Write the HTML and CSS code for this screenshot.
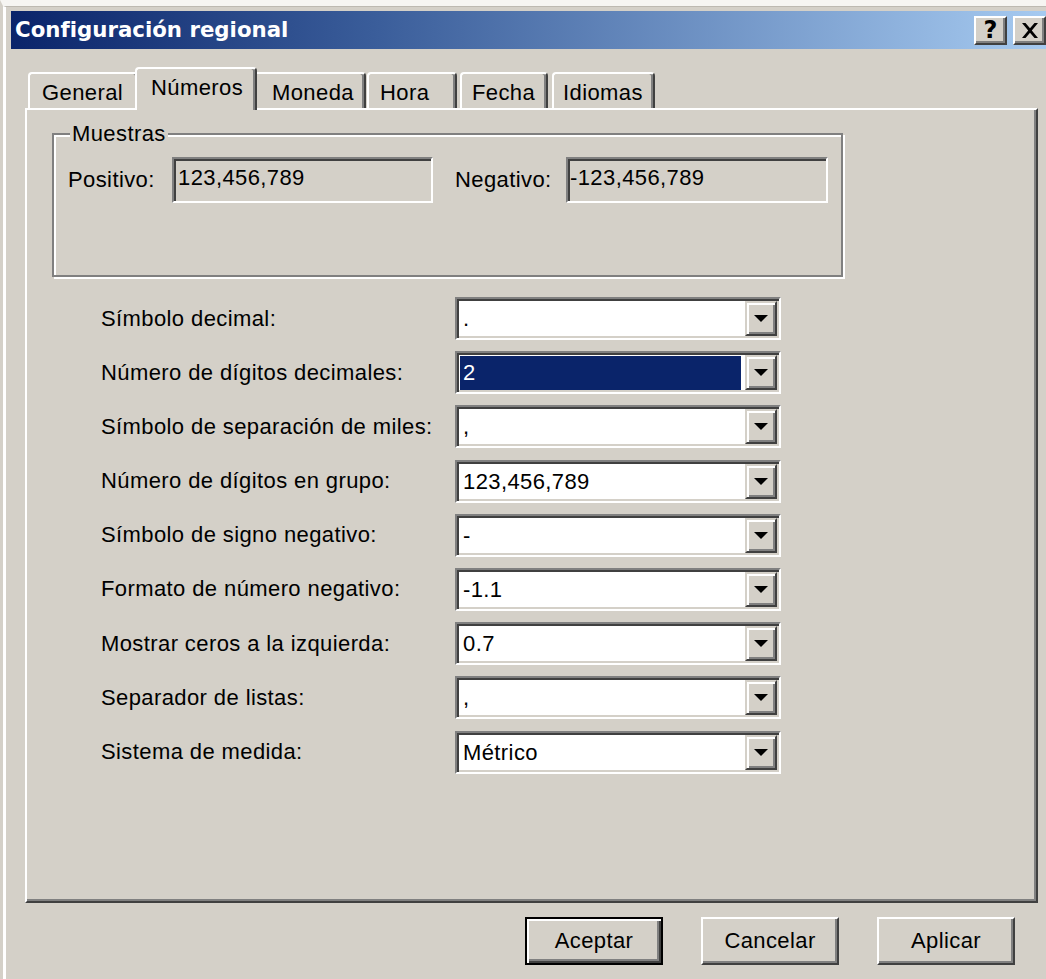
FILE: index.html
```html
<!DOCTYPE html>
<html lang="es">
<head>
<meta charset="utf-8">
<title>Configuración regional</title>
<link rel="stylesheet" href="styles.css">
</head>
<body>
<div class="frame">
  <div class="window">
    <div class="titlebar">
      <span class="title">Configuración regional</span>
      <div class="caption-buttons">
        <div class="cap-btn help">?</div>
        <div class="cap-btn close">
          <svg width="18" height="15" viewBox="0 0 18 15"><path d="M1 0h3.5l4.5 5.3 4.5-5.3h3.5l-6.2 7.5 6.2 7.5h-3.5l-4.5-5.3-4.5 5.3h-3.5l6.2-7.5z" fill="#000"/></svg>
        </div>
      </div>
    </div>

    <div class="client">
      <div class="tabs">
        <div class="tab tab-general">General</div>
        <div class="tab tab-numeros active">Números</div>
        <div class="tab tab-moneda">Moneda</div>
        <div class="tab tab-hora">Hora</div>
        <div class="tab tab-fecha">Fecha</div>
        <div class="tab tab-idiomas">Idiomas</div>
      </div>

      <div class="panel">
        <fieldset class="group">
          <legend>Muestras</legend>
          <div class="samples">
            <span class="sample-label">Positivo:</span>
            <div class="sample-field">123,456,789</div>
            <span class="sample-label neg">Negativo:</span>
            <div class="sample-field neg-field">-123,456,789</div>
          </div>
        </fieldset>

        <div class="settings">
          <label class="setting-label">Símbolo decimal:</label>
          <div class="combo"><span class="combo-value">.</span><span class="combo-btn"><svg width="14" height="7" viewBox="0 0 14 7"><path d="M0 0h14l-7 7z" fill="#000"/></svg></span></div>

          <label class="setting-label">Número de dígitos decimales:</label>
          <div class="combo"><span class="combo-value"><span class="selection">2</span></span><span class="combo-btn"><svg width="14" height="7" viewBox="0 0 14 7"><path d="M0 0h14l-7 7z" fill="#000"/></svg></span></div>

          <label class="setting-label">Símbolo de separación de miles:</label>
          <div class="combo"><span class="combo-value">,</span><span class="combo-btn"><svg width="14" height="7" viewBox="0 0 14 7"><path d="M0 0h14l-7 7z" fill="#000"/></svg></span></div>

          <label class="setting-label">Número de dígitos en grupo:</label>
          <div class="combo"><span class="combo-value">123,456,789</span><span class="combo-btn"><svg width="14" height="7" viewBox="0 0 14 7"><path d="M0 0h14l-7 7z" fill="#000"/></svg></span></div>

          <label class="setting-label">Símbolo de signo negativo:</label>
          <div class="combo"><span class="combo-value">-</span><span class="combo-btn"><svg width="14" height="7" viewBox="0 0 14 7"><path d="M0 0h14l-7 7z" fill="#000"/></svg></span></div>

          <label class="setting-label">Formato de número negativo:</label>
          <div class="combo"><span class="combo-value">-1.1</span><span class="combo-btn"><svg width="14" height="7" viewBox="0 0 14 7"><path d="M0 0h14l-7 7z" fill="#000"/></svg></span></div>

          <label class="setting-label">Mostrar ceros a la izquierda:</label>
          <div class="combo"><span class="combo-value">0.7</span><span class="combo-btn"><svg width="14" height="7" viewBox="0 0 14 7"><path d="M0 0h14l-7 7z" fill="#000"/></svg></span></div>

          <label class="setting-label">Separador de listas:</label>
          <div class="combo"><span class="combo-value">,</span><span class="combo-btn"><svg width="14" height="7" viewBox="0 0 14 7"><path d="M0 0h14l-7 7z" fill="#000"/></svg></span></div>

          <label class="setting-label">Sistema de medida:</label>
          <div class="combo"><span class="combo-value">Métrico</span><span class="combo-btn"><svg width="14" height="7" viewBox="0 0 14 7"><path d="M0 0h14l-7 7z" fill="#000"/></svg></span></div>
        </div>
      </div>

      <div class="actions">
        <div class="btn default">Aceptar</div>
        <div class="btn">Cancelar</div>
        <div class="btn">Aplicar</div>
      </div>
    </div>
  </div>
</div>
</body>
</html>
```

FILE: styles.css
```css
/* Classic 3D dialog palette */
html, body {
  margin: 0;
  padding: 0;
}

body {
  width: 1046px;
  height: 979px;
  overflow: hidden;
  background: #d4d0c8;
  font-family: "Liberation Sans", Arial, sans-serif;
  font-size: 22px;
  line-height: 26px;
  letter-spacing: 0.4px;
  color: #000;
}

/* Window frame */
.frame {
  height: 100%;
  box-sizing: border-box;
  border-top: 6px solid #f6f5f2;
  border-left: 3px solid #d4d0c8;
}

.window {
  height: 100%;
  box-sizing: border-box;
  border-top: 1px solid #bdb9b1;
  border-left: 3px solid #fff;
  padding: 4px 0 0 5px;
}

/* Caption */
.titlebar {
  height: 38px;
  display: flex;
  align-items: center;
  justify-content: space-between;
  padding-left: 4px;
  background: linear-gradient(to right, #0a246a 0%, #3a5d9a 35%, #a6caf0 100%);
}

.title {
  font-family: "DejaVu Sans", Verdana, sans-serif;
  font-weight: bold;
  font-size: 21.3px;
  letter-spacing: 0;
  color: #fff;
  white-space: nowrap;
}

.caption-buttons {
  display: flex;
  gap: 6px;
}

.cap-btn {
  width: 33px;
  height: 29px;
  box-sizing: border-box;
  display: flex;
  align-items: center;
  justify-content: center;
  background: #d4d0c8;
  border: 2px solid;
  border-color: #fff #404040 #404040 #fff;
  box-shadow: inset -2px -2px #808080;
}

.cap-btn.help {
  font-family: "DejaVu Sans", Verdana, sans-serif;
  font-weight: bold;
  font-size: 24px;
  letter-spacing: 0;
  padding-bottom: 1px;
}

/* Client area */
.client {
  padding: 18px 8px 0 14px;
}

/* Tab strip */
.tabs {
  position: relative;
  z-index: 1;
  height: 41px;
  display: flex;
  align-items: flex-end;
  padding-left: 3px;
}

.tab {
  flex: none;
  height: 36px;
  box-sizing: border-box;
  padding-top: 6px;
  background: #d4d0c8;
  border-top: 2px solid #fff;
  border-left: 2px solid #fff;
  border-right: 2px solid #404040;
  border-radius: 4px 4px 0 0;
  box-shadow: inset -2px 0 #808080;
  white-space: nowrap;
}

.tab.active {
  height: 43px;
  margin-bottom: -2px;
  position: relative;
  z-index: 2;
}

.tab-general { width: 111px; padding-left: 12px; }
.tab-numeros { width: 122px; margin: 0 -4px; padding-left: 14px; }
.tab-moneda  { width: 113px; padding-left: 17px; }
.tab-hora    { width: 90px;  margin-left: 1px; padding-left: 11px; }
.tab-fecha   { width: 88px;  margin-left: 3px; padding-left: 10px; }
.tab-idiomas { width: 103px; margin-left: 4px; padding-left: 9px; }

/* Property page */
.panel {
  height: 795px;
  box-sizing: border-box;
  border: 2px solid;
  border-color: #fff #404040 #404040 #fff;
  box-shadow: inset -2px -2px #808080;
}

/* Etched group box */
.group {
  margin: 11px 0 0 25px;
  padding: 0;
  width: 791px;
  height: 156px;
  box-sizing: border-box;
  min-width: 0;
  border: 2px solid #808080;
  box-shadow: inset 2px 2px #fff, 2px 2px #fff;
}

.group legend {
  margin-left: 16px;
  padding: 0 2px;
  line-height: 26px;
  background: #d4d0c8;
}

.samples {
  display: flex;
  align-items: center;
  margin-top: 10px;
  padding-left: 14px;
}

.sample-label {
  width: 104px;
  flex: none;
}

.sample-label.neg {
  width: 111px;
  margin-left: 22px;
}

.sample-field {
  width: 261px;
  height: 46px;
  box-sizing: border-box;
  padding: 6px 4px 0 4px;
  border: 2px solid;
  border-color: #808080 #fff #fff #808080;
  box-shadow: inset 2px 2px #404040, inset -2px -2px #d4d0c8;
  white-space: nowrap;
}

.sample-field.neg-field {
  width: 262px;
  padding-left: 2px;
}

/* Settings list */
.settings {
  display: grid;
  grid-template-columns: 354px 326px;
  grid-auto-rows: 43px;
  row-gap: 11.2px;
  align-items: center;
  margin-top: 20px;
  padding-left: 74px;
}

.setting-label {
  white-space: nowrap;
}

.combo {
  height: 43px;
  box-sizing: border-box;
  display: flex;
  padding: 2px;
  background: #fff;
  border: 2px solid;
  border-color: #808080 #fff #fff #808080;
  box-shadow: inset 2px 2px #404040, inset -2px -2px #d4d0c8;
}

.combo-value {
  flex: 1;
  display: flex;
  align-items: center;
  padding: 1px 3px 0 4px;
  white-space: nowrap;
}

.combo-value .selection {
  flex: 1;
  align-self: stretch;
  display: flex;
  align-items: center;
  margin: 0 1px 0 -3px;
  padding-left: 3px;
  background: #0a246a;
  color: #fff;
}

.combo-btn {
  width: 32px;
  flex: none;
  box-sizing: border-box;
  display: flex;
  align-items: center;
  justify-content: center;
  background: #d4d0c8;
  border: 2px solid;
  border-color: #d4d0c8 #404040 #404040 #d4d0c8;
  box-shadow: inset 2px 2px #fff, inset -2px -2px #808080;
}

/* Dialog buttons */
.actions {
  display: flex;
  justify-content: flex-end;
  gap: 38px;
  margin-top: 14px;
  padding-right: 23px;
}

.btn {
  width: 138px;
  height: 48px;
  box-sizing: border-box;
  display: flex;
  align-items: center;
  justify-content: center;
  background: #d4d0c8;
  border: 2px solid;
  border-color: #fff #404040 #404040 #fff;
  box-shadow: inset -2px -2px #808080;
}

.btn.default {
  border-color: #000;
  box-shadow: inset 2px 2px #fff, inset -2px -2px #404040, inset -4px -4px #808080;
}
```
